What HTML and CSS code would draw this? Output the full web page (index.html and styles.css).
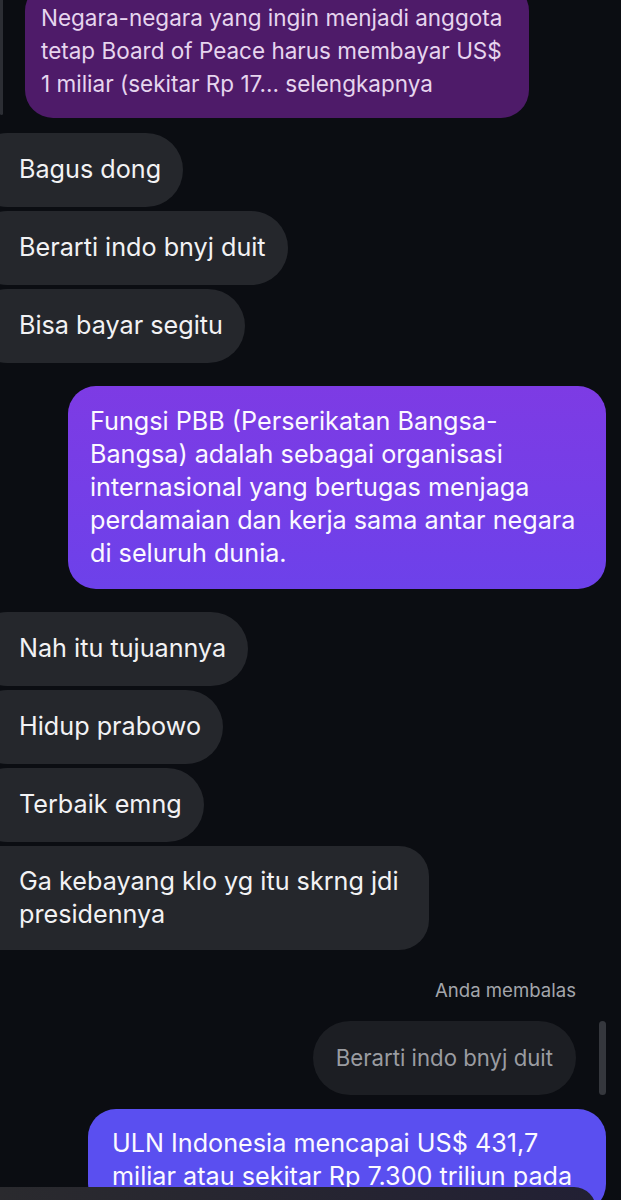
FILE: index.html
```html
<!DOCTYPE html>
<html lang="id">
<head>
<meta charset="utf-8">
<title>Chat</title>
<link rel="stylesheet" href="styles.css">
</head>
<body>
<div class="chat">
  <div class="row-quote">
    <div class="quote-bar"></div>
    <div class="bubble-shared">Negara-negara yang ingin menjadi anggota<br>tetap Board of Peace harus membayar US$<br>1 miliar (sekitar Rp 17... selengkapnya</div>
  </div>

  <div class="group in first">
    <div class="bubble-in">Bagus dong</div>
    <div class="bubble-in">Berarti indo bnyj duit</div>
    <div class="bubble-in">Bisa bayar segitu</div>
  </div>

  <div class="group out">
    <div class="bubble-out">Fungsi PBB (Perserikatan Bangsa-<br>Bangsa) adalah sebagai organisasi<br>internasional yang bertugas menjaga<br>perdamaian dan kerja sama antar negara<br>di seluruh dunia.</div>
  </div>

  <div class="group in">
    <div class="bubble-in">Nah itu tujuannya</div>
    <div class="bubble-in">Hidup prabowo</div>
    <div class="bubble-in">Terbaik emng</div>
    <div class="bubble-in multi">Ga kebayang klo yg itu skrng jdi<br>presidennya</div>
  </div>

  <div class="reply-label">Anda membalas</div>
  <div class="reply-row">
    <div class="bubble-replied">Berarti indo bnyj duit</div>
    <div class="reply-bar"></div>
  </div>
  <div class="group out last">
    <div class="bubble-blue">ULN Indonesia mencapai US$ 431,7<br>miliar atau sekitar Rp 7.300 triliun pada</div>
  </div>
</div>
<div class="composer"></div>
</body>
</html>
```

FILE: styles.css
```css
html, body {
  margin: 0;
  padding: 0;
  background: #0b0d12;
  height: 1200px;
  overflow: hidden;
}
body {
  font-family: Inter, "Noto Sans", sans-serif;
  color: #f2f2f4;
}
.chat {
  display: flex;
  flex-direction: column;
}
.row-quote {
  display: flex;
  align-items: stretch;
  gap: 22px;
  margin-top: -17px;
}
.quote-bar {
  width: 3px;
  background: #2c2e34;
  border-radius: 0 0 2px 2px;
  margin-bottom: 3px;
}
.bubble-shared {
  background: #4e1b69;
  color: #e6d5ee;
  font-size: 22.5px;
  line-height: 33px;
  padding: 18px 10px 18px 16px;
  border-radius: 28px;
  width: 478px;
  white-space: nowrap;
}
.group {
  display: flex;
  flex-direction: column;
  gap: 4px;
}
.group.in {
  align-items: flex-start;
  margin-top: 23px;
}
.group.in.first {
  margin-top: 15px;
}
.group.out {
  align-items: flex-end;
  margin-top: 23px;
  padding-right: 15px;
}
.bubble-in {
  background: #25272c;
  font-size: 25.2px;
  line-height: 33px;
  padding: 20px 22px 21px 49px;
  margin-left: -30px;
  border-radius: 37px;
  white-space: nowrap;
}
.bubble-in.multi {
  padding-top: 19px;
  padding-bottom: 19px;
  padding-right: 30px;
  border-radius: 30px;
}
.bubble-out {
  background: linear-gradient(180deg, #7d3be4 0%, #6d41ea 100%);
  color: #fbf9ff;
  font-size: 25.2px;
  line-height: 33px;
  padding: 19px 10px 19px 22px;
  border-radius: 28px;
  width: 506px;
  white-space: nowrap;
}
.reply-label {
  align-self: flex-end;
  margin-top: 30px;
  padding-right: 45px;
  font-size: 18.6px;
  line-height: 20px;
  color: #a3a5ab;
}
.reply-row {
  display: flex;
  justify-content: flex-end;
  align-items: stretch;
  gap: 23px;
  padding-right: 15px;
  margin-top: 21px;
}
.bubble-replied {
  background: #1c1e23;
  color: #9a9ca1;
  font-size: 22.2px;
  line-height: 33px;
  padding: 20px 23px 21px 23px;
  border-radius: 37px;
}
.reply-bar {
  width: 7px;
  background: #35373d;
  border-radius: 4px;
}
.group.out.last {
  margin-top: 14px;
}
.bubble-blue {
  background: #5a4ff0;
  color: #fbfaff;
  font-size: 25.2px;
  line-height: 33px;
  padding: 18px 10px 19px 24px;
  border-radius: 28px;
  width: 484px;
  white-space: nowrap;
}
.composer {
  position: fixed;
  left: 0;
  bottom: -30px;
  width: 596px;
  height: 43px;
  border-radius: 0 22px 0 0;
  background: linear-gradient(90deg, #2a2a2e 0%, #222034 100%);
}
```
